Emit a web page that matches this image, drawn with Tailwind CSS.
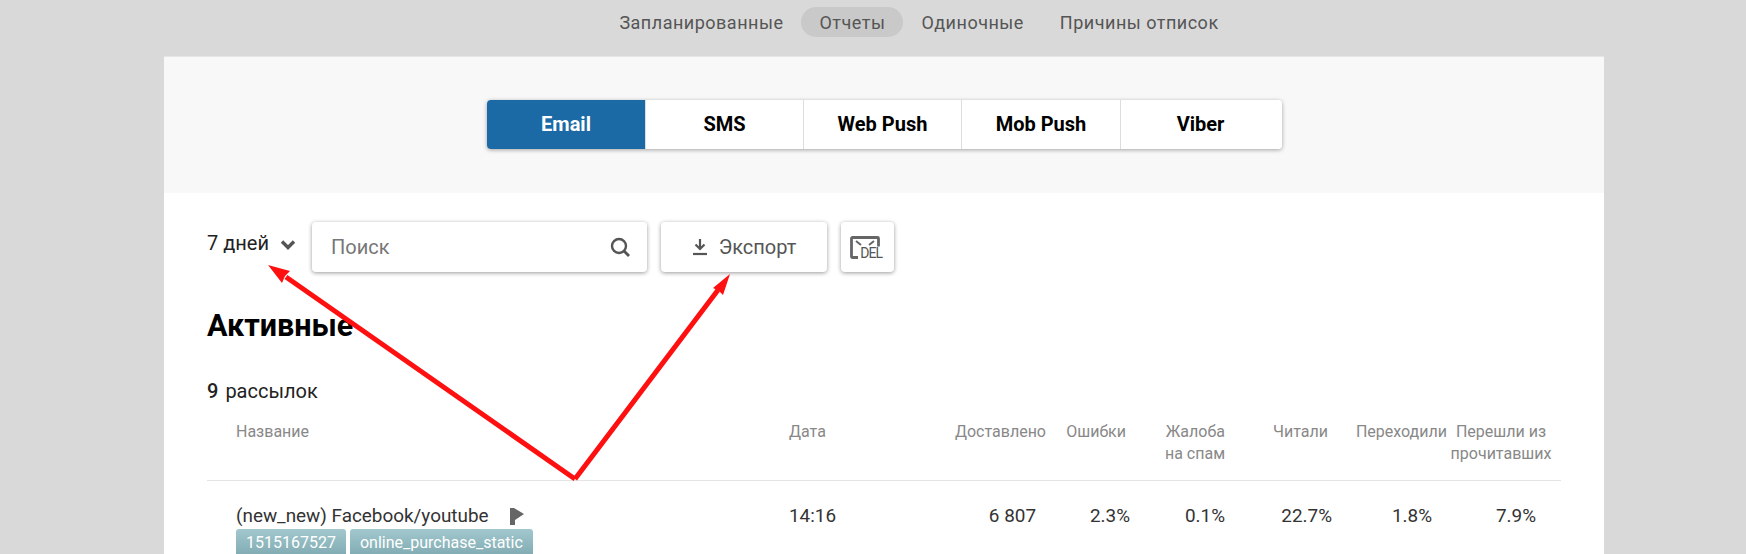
<!DOCTYPE html>
<html lang="ru">

<head>
    <meta charset="UTF-8">
    <script src="https://cdn.jsdelivr.net/npm/@tailwindcss/browser@4"></script>
    <title>Отчеты</title>
</head>

<body class="relative h-screen overflow-hidden bg-[#d9d9d9] font-['Roboto',sans-serif]">
    <nav class="flex h-[56px] items-start justify-center pt-[7px] pl-[92px] text-[18px] tracking-[0.5px] text-[#555]">
        <a class="flex h-[30px] items-center px-[18px]">Запланированные</a>
        <a class="flex h-[30px] items-center rounded-full bg-[#c9c9c9] px-[18px]">Отчеты</a>
        <a class="flex h-[30px] items-center px-[18px]">Одиночные</a>
        <a class="flex h-[30px] items-center px-[18px]">Причины отписок</a>
    </nav>

    <main class="ml-[164px] h-[498px] w-[1440px] border-t border-[#e6e6e6] bg-white">
        <div class="h-[136px] bg-[#f8f8f8] pt-[43px] pl-[323px]">
            <div class="flex h-[49px] w-[795px] overflow-hidden rounded-[4px] text-[20px] font-bold text-black shadow-[0_1px_4px_rgba(0,0,0,0.35)]">
                <a class="flex w-[158px] items-center justify-center bg-[#1b6aa5] pb-[2px] text-white">Email</a>
                <a class="flex w-[158px] items-center justify-center border-l border-[#ddd] bg-white pb-[2px]">SMS</a>
                <a class="flex w-[158px] items-center justify-center border-l border-[#ddd] bg-white pb-[2px]">Web Push</a>
                <a class="flex w-[159px] items-center justify-center border-l border-[#ddd] bg-white pb-[2px]">Mob Push</a>
                <a class="flex flex-1 items-center justify-center border-l border-[#ddd] bg-white pb-[2px] pr-[2px]">Viber</a>
            </div>
        </div>

        <div class="px-[43px] pt-[29px]">
            <div class="flex h-[50px] items-start">
                <div class="flex w-[105px] items-center pt-[6px] text-[20px] text-[#222]">
                    7 дней
                    <svg class="ml-[11px] mt-[2px]" width="16" height="11" viewBox="0 0 16 11"><path d="M2 2.500l6 6 6-6" fill="none" stroke="#555" stroke-width="3.400"/></svg>
                </div>
                <div class="flex h-[50px] w-[335px] items-center justify-between rounded-[4px] bg-white pl-[19px] pr-[16px] text-[20px] text-[#777] shadow-[0_1px_4px_rgba(0,0,0,0.4)]">
                    Поиск
                    <svg width="22" height="22" viewBox="0 0 22 22"><circle cx="10" cy="10" r="7" fill="none" stroke="#555" stroke-width="2.400"/><path d="M15 15l5 5" stroke="#555" stroke-width="2.800"/></svg>
                </div>
                <div class="ml-[14px] flex h-[50px] w-[166px] items-center justify-center gap-[11px] rounded-[4px] bg-white text-[20px] text-[#555] shadow-[0_1px_4px_rgba(0,0,0,0.4)]">
                    <svg width="16" height="18" viewBox="0 0 16 18"><path d="M8 1v9M3.500 6.500L8 11l4.500-4.500" fill="none" stroke="#555" stroke-width="2.200"/><path d="M1 16h14" stroke="#555" stroke-width="2.200"/></svg>
                    Экспорт
                </div>
                <div class="ml-[14px] flex h-[50px] w-[53px] items-center justify-center rounded-[4px] bg-white pr-[3px] shadow-[0_1px_4px_rgba(0,0,0,0.4)]">
                    <div class="relative h-[23px] w-[32px]">
                        <svg width="31" height="23" viewBox="0 0 31 23"><path d="M8 21.500H2.500a1 1 0 0 1-1-1V2.500a1 1 0 0 1 1-1h25a1 1 0 0 1 1 1v8" fill="none" stroke="#666" stroke-width="2.800"/><path d="M6 5l5 4M24 5l-5 4" stroke="#666" stroke-width="2"/></svg>
                        <span class="absolute right-0 bottom-[-1px] text-[14px] leading-[13px] tracking-[-1px] text-[#555]">DEL</span>
                    </div>
                </div>
            </div>

            <h1 class="mt-[35px] text-[30.5px] leading-[38px] font-bold text-black">Активные</h1>
            <p class="mt-[34px] text-[20px] leading-[24px] text-[#222]"><span class="mr-[7px] font-medium">9</span>рассылок</p>

            <div class="mt-[18px] grid grid-cols-[553px_161px_96px_84px_95px_107px_115px_106px] border-b border-[#e4e4e4] pl-[29px] pb-[15px] text-[16px] leading-[22px] text-[#888]">
                <div>Название</div>
                <div>Дата</div>
                <div class="text-right">Доставлено</div>
                <div class="pr-[4px] text-right">Ошибки</div>
                <div class="text-right">Жалоба<br>на спам</div>
                <div class="pr-[4px] text-right">Читали</div>
                <div class="text-right">Переходили</div>
                <div class="pl-[2px] text-center whitespace-nowrap">Перешли из<br>прочитавших</div>
            </div>

            <div class="grid grid-cols-[553px_161px_96px_84px_95px_107px_115px_106px] pl-[29px] pt-[23px] text-[18.9px] leading-[24px] text-[#333]">
                <div>
                    <div class="flex items-center">
                        (new_new) Facebook/youtube
                        <svg class="ml-[21px]" width="14" height="17" viewBox="0 0 14 17"><path d="M0 0h4l10 6-9 6v5H0z" fill="#666"/></svg>
                    </div>
                    <div class="mt-[1px] flex gap-[4px]">
                        <span class="rounded-t-[3px] bg-gradient-to-b from-[#a2c8ce] to-[#7fa9b1] px-[10px] text-[16px] leading-[28px] text-white">1515167527</span>
                        <span class="rounded-t-[3px] bg-gradient-to-b from-[#a2c8ce] to-[#7fa9b1] px-[10px] text-[16px] leading-[28px] text-white">online_purchase_static</span>
                    </div>
                </div>
                <div>14:16</div>
                <div class="pr-[10px] text-right">6 807</div>
                <div class="text-right">2.3%</div>
                <div class="text-right">0.1%</div>
                <div class="text-right">22.7%</div>
                <div class="pr-[15px] text-right">1.8%</div>
                <div class="pr-[17px] text-right">7.9%</div>
            </div>
        </div>
    </main>

    <!-- red annotation arrows over the page -->
    <svg class="absolute inset-0" width="1746" height="554" viewBox="0 0 1746 554">
        <path d="M575 479L286 277M575 479L718 290" fill="none" stroke="#ff1010" stroke-width="5"/>
        <path d="M268 265L290 271 285 276 282 283z" fill="#ff1010"/>
        <path d="M730 274L723 295 719 291 713 288z" fill="#ff1010"/>
    </svg>
</body>

</html>
